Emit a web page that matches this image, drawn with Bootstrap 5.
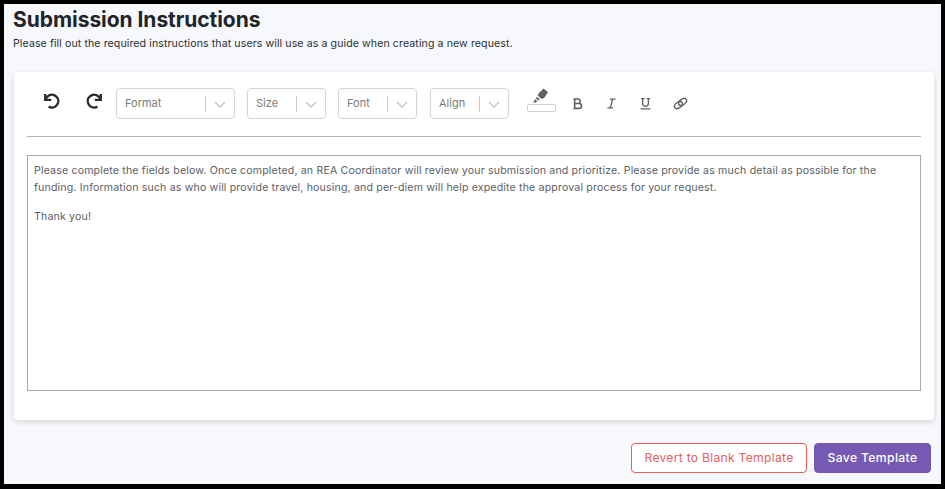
<!DOCTYPE html>
<html lang="en">
<head>
<meta charset="utf-8">
<title>Submission Instructions</title>
<link href="https://cdn.jsdelivr.net/npm/bootstrap@5.3.0/dist/css/bootstrap.min.css" rel="stylesheet">
<style>
html,body{height:100%;}
body{background:#000;font-family:Inter,"Noto Sans",sans-serif;overflow:hidden;}
.frame{width:937px;height:480px;margin:4px 0 0 4px;background:#f7f8fc;padding:4px 7px 0 10px;}
.page-title{font-size:21px;font-weight:700;line-height:24px;color:#212529;margin:0 0 4px -1px;letter-spacing:-.05px;}
.page-sub{font-size:10.6px;line-height:16px;color:#2b2f33;margin:0 0 20px -1px;letter-spacing:.09px;}
.editor-card{height:348px;border:0;border-radius:4px;box-shadow:0 2px 6px rgba(0,0,0,.14);padding:0 13px;}
.toolbar{height:65px;border-bottom:1px solid #b5b5b5;padding:16px 0 0 16px;margin-bottom:18px;}
.tool-icon{width:18px;height:18px;color:#2a2b2e;}
.undo-btn{width:42px;}
.redo-btn{width:31px;}
.pick{height:31px;border:1px solid #d4d4d4;border-radius:4px;background:#fff;font-size:11px;color:#7b7b7b;padding:0 7px 0 8px;margin-right:12px;}
.pick-label{flex:1 1 auto;}
.pick-sep{width:1px;height:16px;background:#c8c8c8;margin-right:7px;}
.pick-chev{width:14px;height:14px;color:#c4c4c4;}
.pick-format{width:119px;}
.pick-size{width:79px;}
.pick-font{width:79px;margin-right:13px;}
.pick-align{width:79px;margin-right:18px;}
.marker-wrap{width:29px;}
.marker-swatch{display:block;width:29px;height:8px;border:1px solid #cfcfcf;border-radius:2px;background:#fff;}
.mark-icon{width:17px;height:16px;color:#5c6168;margin:0 0 0 5px;display:block;}
.fmt{width:34px;color:#5c6168;padding-top:9px;}
.fmt-first{margin-left:4px;}
.fmt-svg{width:13px;height:13px;color:#5c6168;}
.link-svg{width:15px;height:15px;margin:-1px 0 0 2px;}
.editor-box{height:236px;border:1px solid #a9a9a9;padding:6px 6px;font-size:10.6px;line-height:17px;color:#5b6065;letter-spacing:.16px;}
.editor-box p{margin:0 0 12px;}
.actions{padding:23px 3px 0 0;gap:7px;}
.btn-revert,.btn-save{height:30px;font-size:12.2px;padding:0;border-radius:4px;}
.btn-revert{width:176px;border:1px solid #e5605f;color:#e5605f;background:#fff;letter-spacing:.25px;}
.btn-save{width:117px;background:#7559b3;border:1px solid #7559b3;color:#fff;font-weight:500;letter-spacing:.35px;}
</style>
</head>
<body>
<div class="frame">
  <h1 class="page-title">Submission Instructions</h1>
  <p class="page-sub">Please fill out the required instructions that users will use as a guide when creating a new request.</p>
  <div class="card editor-card">
    <div class="toolbar d-flex align-items-start">
      <span class="undo-btn d-flex pt-1"><svg class="tool-icon" viewBox="0 0 24 24" fill="none" stroke="currentColor" stroke-width="3.2"><path d="M7.500 19.500a8.500 8.500 0 1 0-1.500-13.500L3.500 9"/><path d="M3 2.500V10.500h8" stroke-linejoin="miter"/></svg></span>
      <span class="redo-btn d-flex pt-1"><svg class="tool-icon" viewBox="0 0 24 24" fill="none" stroke="currentColor" stroke-width="3.2"><path d="M16.500 19.500a8.500 8.500 0 1 1 1.500-13.500L20.500 9"/><path d="M21 2.500V10.500h-8" stroke-linejoin="miter"/></svg></span>
      <div class="pick pick-format d-flex align-items-center"><span class="pick-label">Format</span><span class="pick-sep"></span><svg class="pick-chev" viewBox="0 0 14 14" fill="none" stroke="currentColor" stroke-width="1.4"><path d="M2 5l5 5 5-5"/></svg></div>
      <div class="pick pick-size d-flex align-items-center"><span class="pick-label">Size</span><span class="pick-sep"></span><svg class="pick-chev" viewBox="0 0 14 14" fill="none" stroke="currentColor" stroke-width="1.4"><path d="M2 5l5 5 5-5"/></svg></div>
      <div class="pick pick-font d-flex align-items-center"><span class="pick-label">Font</span><span class="pick-sep"></span><svg class="pick-chev" viewBox="0 0 14 14" fill="none" stroke="currentColor" stroke-width="1.4"><path d="M2 5l5 5 5-5"/></svg></div>
      <div class="pick pick-align d-flex align-items-center"><span class="pick-label">Align</span><span class="pick-sep"></span><svg class="pick-chev" viewBox="0 0 14 14" fill="none" stroke="currentColor" stroke-width="1.4"><path d="M2 5l5 5 5-5"/></svg></div>
      <div class="marker-wrap">
        <svg class="mark-icon" viewBox="0 0 17 16" fill="currentColor"><path d="M11.500.5l4.500 3.800-4 5.700-2.300 1L5.800 7.800l.5-2z"/><path d="M5 8.800l2.900 2.600-1.500 1.200-2.600-2.300z"/><path d="M3.300 11.200l2 1.800-1.300 1.500H1z"/></svg>
        <span class="marker-swatch"></span>
      </div>
      <span class="fmt fmt-first d-flex justify-content-center"><svg class="fmt-svg" viewBox="0 0 16 16" fill="none" stroke="currentColor" stroke-width="2"><path d="M3 2.500h6a2.800 2.800 0 0 1 0 5.500H4M4 8h6a3 3 0 0 1 0 6H3M4.500 2.500v11.500"/></svg></span>
      <span class="fmt d-flex justify-content-center"><svg class="fmt-svg" viewBox="0 0 16 16" fill="none" stroke="currentColor" stroke-width="1.600"><path d="M6 2.500h7M3 13.500h7M9.500 2.500l-3 11"/></svg></span>
      <span class="fmt d-flex justify-content-center"><svg class="fmt-svg" viewBox="0 0 16 16" fill="none" stroke="currentColor" stroke-width="1.600"><path d="M2.500 2h4.500M9.500 2h4M4.500 2v6a3.500 3.500 0 0 0 7 0V2M2 14.500h12"/></svg></span>
      <span class="fmt d-flex justify-content-center"><svg class="fmt-svg link-svg" viewBox="0 0 16 16" fill="none" stroke="currentColor" stroke-width="1.500"><ellipse cx="5.800" cy="9.700" rx="4.800" ry="3" transform="rotate(-35 5.800 9.700)"/><ellipse cx="10.200" cy="6.300" rx="4.800" ry="3" transform="rotate(-35 10.200 6.300)"/></svg></span>
    </div>
    <div class="editor-box">
      <p>Please complete the fields below. Once completed, an REA Coordinator will review your submission and prioritize. Please provide as much detail as possible for the funding. Information such as who will provide travel, housing, and per-diem will help expedite the approval process for your request.</p>
      <p>Thank you!</p>
    </div>
  </div>
  <div class="actions d-flex justify-content-end">
    <button type="button" class="btn btn-revert">Revert to Blank Template</button>
    <button type="button" class="btn btn-save">Save Template</button>
  </div>
</div>
<script src="https://cdn.jsdelivr.net/npm/bootstrap@5.3.0/dist/js/bootstrap.bundle.min.js"></script>
</body>
</html>
